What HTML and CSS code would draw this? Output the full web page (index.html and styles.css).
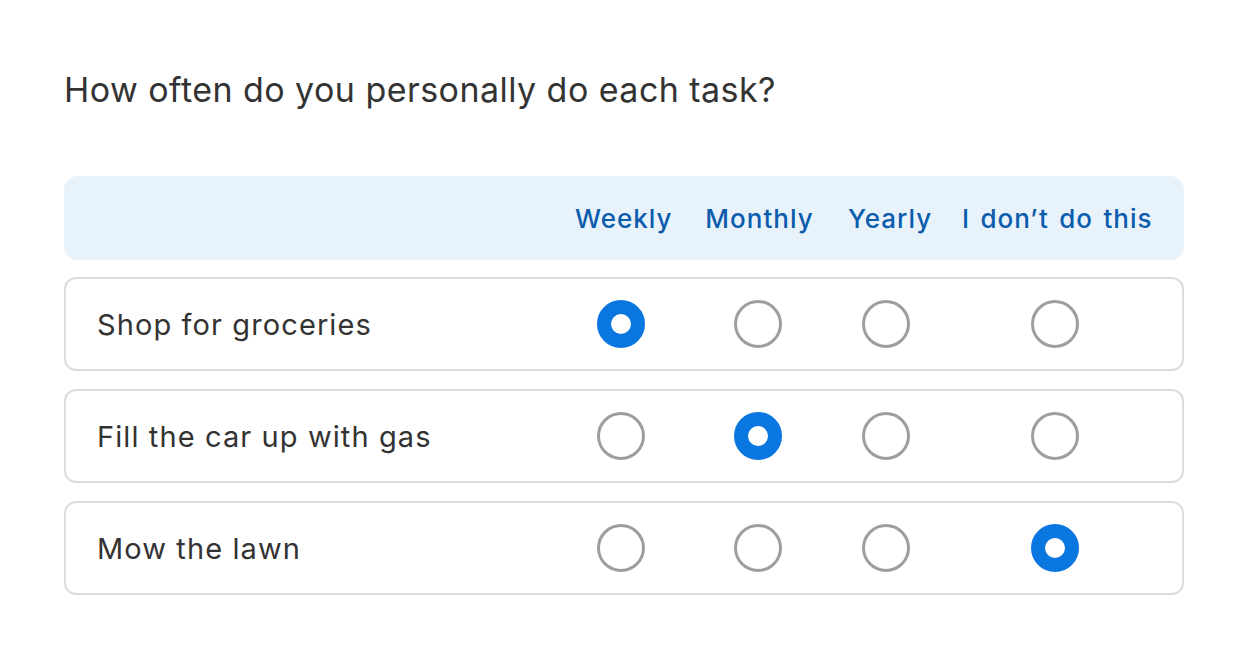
FILE: index.html
```html
<!DOCTYPE html>
<html lang="en">
<head>
<meta charset="utf-8">
<title>Survey</title>
<link rel="stylesheet" href="styles.css">
</head>
<body>
<main class="page">
  <h1 class="question">How often do you personally do each task?</h1>
  <div class="matrix">
    <div class="head">
      <span class="head-spacer"></span>
      <span class="col-label">Weekly</span>
      <span class="col-label">Monthly</span>
      <span class="col-label">Yearly</span>
      <span class="col-label">I don’t do this</span>
    </div>
    <div class="row">
      <span class="row-label">Shop for groceries</span>
      <span class="cell"><span class="radio on"></span></span>
      <span class="cell"><span class="radio"></span></span>
      <span class="cell"><span class="radio"></span></span>
      <span class="cell"><span class="radio"></span></span>
    </div>
    <div class="row">
      <span class="row-label">Fill the car up with gas</span>
      <span class="cell"><span class="radio"></span></span>
      <span class="cell"><span class="radio on"></span></span>
      <span class="cell"><span class="radio"></span></span>
      <span class="cell"><span class="radio"></span></span>
    </div>
    <div class="row">
      <span class="row-label">Mow the lawn</span>
      <span class="cell"><span class="radio"></span></span>
      <span class="cell"><span class="radio"></span></span>
      <span class="cell"><span class="radio"></span></span>
      <span class="cell"><span class="radio on"></span></span>
    </div>
  </div>
</main>
</body>
</html>
```
FILE: styles.css
```css
* { box-sizing: border-box; }
html, body { margin: 0; padding: 0; background: #ffffff; }
body { font-family: Inter, "Liberation Sans", sans-serif; color: #333333; }
.page { padding: 68px 64px 0 64px; width: 1248px; }
.question {
  margin: 0 0 64px 0;
  font-family: Inter, "Liberation Sans", sans-serif;
  font-weight: 400;
  font-size: 34px;
  line-height: 44px;
  letter-spacing: 0.45px;
  color: #333333;
}
.matrix { display: flex; flex-direction: column; gap: 18px; }
.head, .row {
  display: grid;
  grid-template-columns: 1fr 96px 109px 80px 190px;
  column-gap: 34px;
  align-items: center;
  padding: 0 32px 0 31px;
}
.head {
  height: 84px;
  background: #e8f2fb;
  border-radius: 14px;
  margin-bottom: -1px;
}
.col-label {
  text-align: center;
  white-space: nowrap;
  font-size: 26px;
  letter-spacing: 1px;
  word-spacing: 2.5px;
  color: #0b5cad;
  font-weight: 500;
}
.row {
  height: 94px;
  border: 2px solid #dcdcdc;
  border-radius: 12px;
}
.row-label { font-size: 29px; letter-spacing: 1.1px; color: #333333; }
.cell { display: flex; justify-content: center; }
.radio {
  width: 48px; height: 48px;
  border-radius: 50%;
  border: 3px solid #9e9e9e;
  background: #ffffff;
}
.radio.on { border: 14px solid #0a76df; }
```
